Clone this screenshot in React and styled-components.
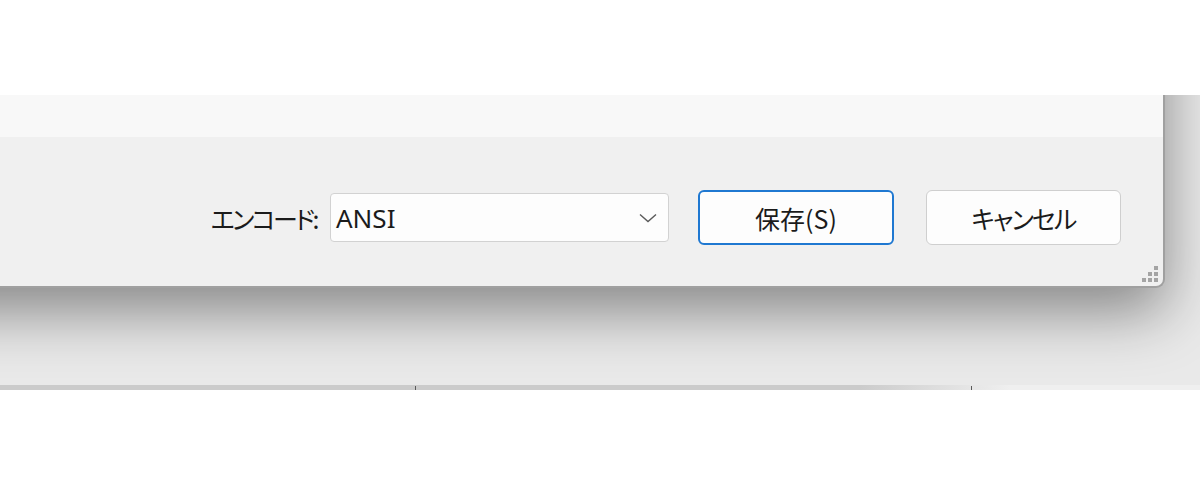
import React from "react";
import styled, { createGlobalStyle } from "styled-components";

const Global = createGlobalStyle`
  html, body { margin: 0; padding: 0; background: #ffffff; }
  body { font-family: "Noto Sans CJK JP", "Noto Sans", sans-serif; }
`;

const Page = styled.div`
  width: 1200px;
  height: 500px;
  padding-top: 95px;
  box-sizing: border-box;
  overflow: hidden;
`;

const Desk = styled.div`
  height: 290px;
  background: #e9e9e9;
  overflow: hidden;
  display: flex;
  flex-direction: column;
`;

const Dialog = styled.div`
  position: relative;
  margin: -100px 0 0 -100px;
  width: 1265px;
  box-sizing: border-box;
  background: #f0f0f0;
  border-right: 2px solid #a0a0a0;
  border-bottom: 2px solid #a0a0a0;
  border-bottom-right-radius: 9px;
  box-shadow: 0 24px 60px rgba(0, 0, 0, 0.42);
  display: flex;
  flex-direction: column;
`;

const TopBand = styled.div`
  height: 142px;
  background: #f8f8f8;
`;

const Footer = styled.div`
  height: 149px;
  padding: 53px 42px 0 0;
  box-sizing: border-box;
  display: flex;
  align-items: flex-start;
  justify-content: flex-end;
`;

const Row = styled.div`
  height: 55px;
  display: flex;
  align-items: center;
`;

const Label = styled.span`
  font-size: 25px;
  color: #1b1b1b;
  font-feature-settings: "palt";
  letter-spacing: -2.5px;
  margin-right: 13px;
`;

const Combo = styled.div`
  width: 339px;
  height: 49px;
  box-sizing: border-box;
  background: #fdfdfd;
  border: 1px solid #d2d2d2;
  border-radius: 4px;
  display: flex;
  align-items: center;
  justify-content: space-between;
  padding: 0 11px 0 5px;
  margin-right: 29px;
  font-size: 26px;
  color: #1b1b1b;
  font-family: "Noto Sans", sans-serif;
`;

const Button = styled.button`
  width: ${(p) => (p.$primary ? "196px" : "195px")};
  height: 55px;
  box-sizing: border-box;
  background: #fdfdfd;
  border: ${(p) => (p.$primary ? "2px solid #1f78d1" : "1.5px solid #cfcfcf")};
  border-radius: 6px;
  font-family: "Noto Sans CJK JP", "Noto Sans", sans-serif;
  font-size: 25px;
  color: #1b1b1b;
  font-feature-settings: "palt";
  letter-spacing: ${(p) => (p.$primary ? "0" : "-1.8px")};
  padding: 0;
  margin-left: ${(p) => (p.$primary ? "0" : "32px")};
  display: flex;
  align-items: center;
  justify-content: center;
`;

const Grip = styled.svg`
  position: absolute;
  right: 4px;
  bottom: 3px;
`;

const Strip = styled.div`
  height: 5px;
  background: linear-gradient(to right, #cbcbcb 0, #cbcbcb 860px, #efefef 1010px);
  display: flex;
  align-items: flex-end;
  padding-left: 415px;
`;

const Tick = styled.span`
  width: 1px;
  height: 4px;
  background: #5a5a5a;
  margin-right: ${(p) => p.$gap || 0}px;
`;

export default function App() {
  return (
    <>
      <Global />
      <Page>
        <Desk>
          <Dialog>
            <TopBand />
            <Footer>
              <Row>
                <Label>エンコード:</Label>
                <Combo>
                  <span>ANSI</span>
                  <svg width="18" height="10" viewBox="0 0 18 10">
                    <path d="M1 1.5 L9 8.5 L17 1.5" fill="none" stroke="#5a5a5a" strokeWidth="1.4" />
                  </svg>
                </Combo>
                <Button $primary>保存(S)</Button>
                <Button>キャンセル</Button>
              </Row>
            </Footer>
            <Grip width="18" height="18" viewBox="0 0 18 18">
              <g fill="#a4a4a4">
                <rect x="13" y="1" width="4" height="4" />
                <rect x="7" y="7" width="4" height="4" />
                <rect x="13" y="7" width="4" height="4" />
                <rect x="1" y="13" width="4" height="4" />
                <rect x="7" y="13" width="4" height="4" />
                <rect x="13" y="13" width="4" height="4" />
              </g>
            </Grip>
          </Dialog>
        </Desk>
        <Strip>
          <Tick $gap={555} />
          <Tick />
        </Strip>
      </Page>
    </>
  );
}
